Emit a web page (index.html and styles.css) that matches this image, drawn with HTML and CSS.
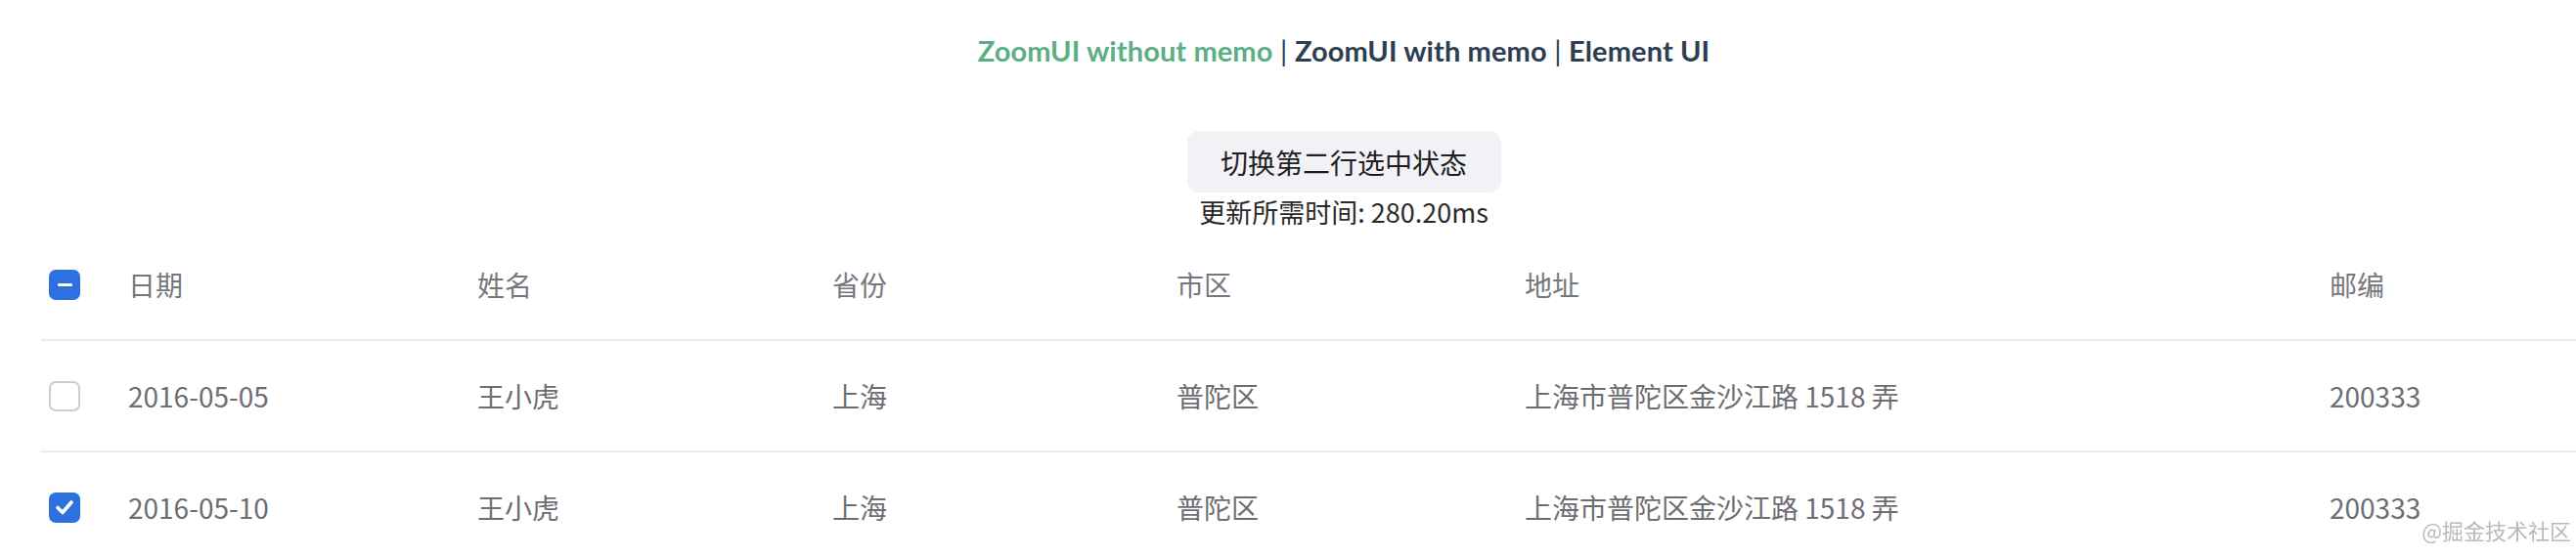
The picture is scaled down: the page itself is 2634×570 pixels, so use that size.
FILE: index.html
```html
<!DOCTYPE html>
<html lang="zh">
<head>
<meta charset="utf-8">
<title>ZoomUI table</title>
<link rel="stylesheet" href="styles.css">
</head>
<body>
<div class="app">
  <div class="nav">
    <a class="link active">ZoomUI without memo</a><span class="sep"> | </span><a class="link">ZoomUI with memo</a><span class="sep"> | </span><a class="link">Element UI</a>
  </div>
  <div class="controls">
    <button class="toggle">切换第二行选中状态</button>
    <div class="time">更新所需时间: 280.20ms</div>
  </div>
  <div class="table">
    <div class="row head">
      <div class="cell check"><span class="box on"><span class="dash"></span></span></div>
      <div class="cell">日期</div>
      <div class="cell">姓名</div>
      <div class="cell">省份</div>
      <div class="cell">市区</div>
      <div class="cell">地址</div>
      <div class="cell">邮编</div>
    </div>
    <div class="row">
      <div class="cell check"><span class="box"></span></div>
      <div class="cell">2016-05-05</div>
      <div class="cell">王小虎</div>
      <div class="cell">上海</div>
      <div class="cell">普陀区</div>
      <div class="cell">上海市普陀区金沙江路 1518 弄</div>
      <div class="cell">200333</div>
    </div>
    <div class="row">
      <div class="cell check"><span class="box on"><svg viewBox="0 0 32 32" width="32" height="32"><path d="M9 16.5 L14 21.5 L23 11" fill="none" stroke="#fff" stroke-width="3.6" stroke-linecap="round" stroke-linejoin="round"/></svg></span></div>
      <div class="cell">2016-05-10</div>
      <div class="cell">王小虎</div>
      <div class="cell">上海</div>
      <div class="cell">普陀区</div>
      <div class="cell">上海市普陀区金沙江路 1518 弄</div>
      <div class="cell">200333</div>
    </div>
  </div>
</div>
<div class="watermark">@掘金技术社区</div>
</body>
</html>
```
FILE: styles.css
```css
html, body {
  margin: 0;
  padding: 0;
  background: #fff;
  overflow: hidden;
}
body {
  font-family: "Noto Sans CJK SC", "Noto Sans", sans-serif;
}
.app {
  width: 2748px;
  text-align: center;
  color: #2c3e50;
}
.nav {
  padding-top: 34px;
  line-height: 36px;
  font-size: 29px;
  letter-spacing: 0.1px;
  font-family: Lato, "Noto Sans CJK SC", sans-serif;
}
.link {
  font-weight: 700;
  color: #2c3e50;
}
.link.active {
  color: #5aaf84;
}
.sep {
  font-weight: 400;
}
.controls {
  margin-top: 64px;
}
.toggle {
  width: 321px;
  height: 63px;
  border: none;
  border-radius: 12px;
  background: #f1f1f6;
  color: #1f1f1f;
  font-family: "Noto Sans CJK SC", sans-serif;
  font-size: 28px;
  padding: 0;
  display: block;
  margin: 0 auto;
}
.time {
  margin-top: 2px;
  line-height: 36px;
  font-size: 27px;
  color: #2a2a2a;
}
.table {
  margin: 0 42px;
  text-align: left;
}
.row {
  display: grid;
  grid-template-columns: 77px 357px 363px 352px 356px 823px 336px;
  height: 112px;
  border-bottom: 2px solid #ededed;
  align-items: center;
  font-size: 28px;
  color: #6d6d72;
}
.row.head {
  color: #76767b;
}
.cell {
  padding-left: 12px;
  white-space: nowrap;
}
.cell.check {
  padding-left: 8px;
  display: flex;
  align-items: center;
}
.box {
  box-sizing: border-box;
  width: 32px;
  height: 31px;
  border: 2px solid #cdcdcd;
  border-radius: 7px;
  background: #fff;
  display: flex;
  align-items: center;
  justify-content: center;
}
.box.on {
  border: none;
  background: #2d70e0;
}
.box svg {
  display: block;
}
.dash {
  width: 15px;
  height: 3px;
  background: #fff;
  border-radius: 1px;
}
.watermark {
  position: fixed;
  right: 5px;
  bottom: 12px;
  font-size: 22px;
  color: #b9b9b9;
  font-family: "Noto Sans CJK SC", sans-serif;
}
```
